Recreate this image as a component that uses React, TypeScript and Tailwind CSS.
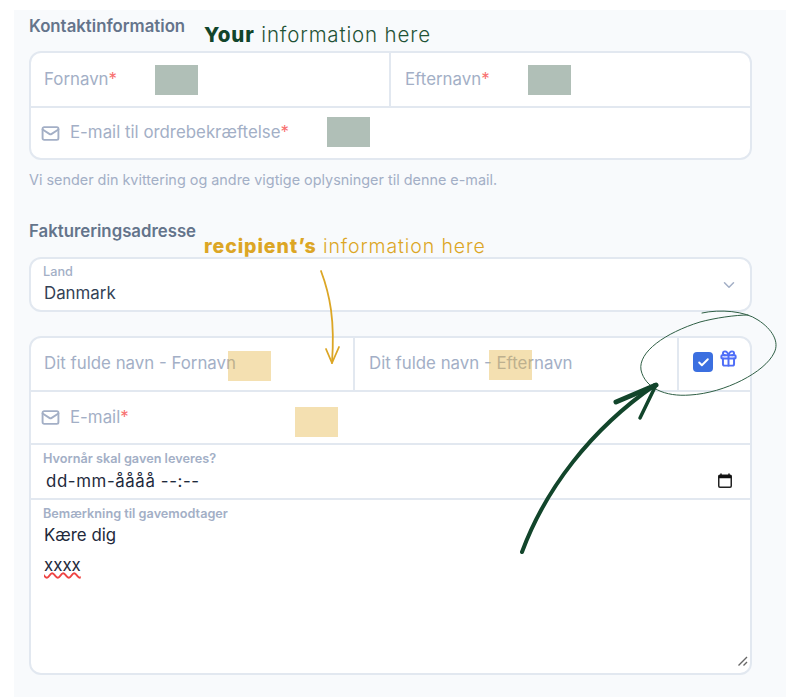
import { Check, ChevronDown, Gift, Mail } from 'lucide-react';

const font = "font-['Inter','Liberation_Sans',sans-serif]";

function Required() {
  return <span className="text-[#f87171]">*</span>;
}

function Patch({ className }: { className: string }) {
  return <div className={`absolute h-[30px] w-[43px] ${className}`} />;
}

export default function App() {
  return (
    <div className={`${font} relative h-[700px] w-[800px] overflow-hidden bg-white px-[14px] pt-[10px]`}>
      <div className="h-[687px] bg-[#f8fafc] pl-[15px] pr-[34px]">
        {/* kontakt */}
        <h2 className="pt-[6px] text-[16.8px] leading-[20px] font-semibold text-[#64748b]">Kontaktinformation</h2>
        <div className="mt-[15px] h-[109px] rounded-[12px] border-2 border-[#e2e8f0] bg-white">
          <div className="flex h-[55px] border-b-2 border-[#e2e8f0]">
            <div className="flex w-[360px] items-center border-r-2 border-[#e2e8f0] pl-[13px] text-[16.85px] text-[#a3afc6]">
              Fornavn<Required />
            </div>
            <div className="flex flex-1 items-center pl-[14px] text-[16.85px] text-[#a3afc6]">
              Efternavn<Required />
            </div>
          </div>
          <div className="flex h-[50px] items-center pl-[10px] text-[16.85px] text-[#a3afc6]">
            <Mail size={19} strokeWidth={2.4} className="mr-[10px] text-[#a3afc6]" />
            E-mail til ordrebekræftelse<Required />
          </div>
        </div>
        <p className="mt-[12px] text-[14.4px] leading-[16px] text-[#a3afc6]">
          Vi sender din kvittering og andre vigtige oplysninger til denne e-mail.
        </p>

        {/* faktura */}
        <h2 className="mt-[33px] text-[16.8px] leading-[20px] font-semibold text-[#64748b]">Faktureringsadresse</h2>
        <div className="relative mt-[16px] h-[55px] rounded-[12px] border-2 border-[#e2e8f0] bg-white pl-[12px] pt-[6px]">
          <div className="text-[12.7px] leading-[14px] font-medium text-[#a3afc6]">Land</div>
          <div className="mt-[3px] pl-[1px] text-[16.85px] leading-[22px] text-[#334155]">Danmark</div>
          <ChevronDown size={18} className="absolute right-[12px] top-[17px] text-[#a3afc6]" />
        </div>

        <div className="mt-[24px] flex h-[339px] flex-col rounded-[12px] border-2 border-[#e2e8f0] bg-white">
          <div className="flex h-[54px] border-b-2 border-[#e2e8f0] text-[16.85px] text-[#a3afc6]">
            <div className="flex w-[324px] items-center border-r-2 border-[#e2e8f0] pl-[13px]">Dit fulde navn - Fornavn</div>
            <div className="flex w-[324px] items-center border-r-2 border-[#e2e8f0] pl-[14px]">Dit fulde navn - Efternavn</div>
            <div className="flex flex-1 items-start pl-[14px] pt-[12px]">
              <span className="mt-[2px] flex h-[20px] w-[20px] items-center justify-center rounded-[4px] bg-[#3b6fe0]">
                <Check size={13} strokeWidth={3.5} className="text-white" />
              </span>
              <Gift size={19} strokeWidth={2.5} className="-mt-[1px] ml-[6px] text-[#4f6ef7]" />
            </div>
          </div>
          <div className="flex h-[53px] items-center border-b-2 border-[#e2e8f0] pl-[10px] text-[16.85px] text-[#a3afc6]">
            <Mail size={19} strokeWidth={2.4} className="mr-[10px] text-[#a3afc6]" />
            E-mail<Required />
          </div>
          <div className="relative h-[55px] border-b-2 border-[#e2e8f0] pl-[12px] pt-[7px]">
            <div className="text-[12.7px] leading-[14px] font-semibold text-[#a3afc6]">Hvornår skal gaven leveres?</div>
            <div className="mt-[4px] pl-[3px] text-[16.85px] leading-[22px] tracking-[0.6px] whitespace-pre text-[#1e293b]">dd-mm-åååå --:--</div>
            <svg viewBox="0 0 16 16" className="absolute right-[17px] top-[28px] h-[16px] w-[16px]">
              <path d="M4 0.5v2M12 0.5v2" stroke="#111" strokeWidth="1.5" />
              <rect x="1.75" y="2.25" width="12.5" height="12" rx="1.2" fill="none" stroke="#222" strokeWidth="1.5" />
              <rect x="1.75" y="2.25" width="12.5" height="3" fill="#111" />
            </svg>
          </div>
          <div className="relative flex-1 pl-[12px] pt-[7px]">
            <div className="text-[12.7px] leading-[14px] font-semibold text-[#a3afc6]">Bemærkning til gavemodtager</div>
            <div className="mt-[2px] pl-[1px] text-[16.85px] leading-[24px] text-[#1e293b]">Kære dig</div>
            <div className="mt-[6px] pl-[1px] text-[16.85px] leading-[24px] text-[#1e293b] underline decoration-wavy decoration-[#ef4444] decoration-2">xxxx</div>
            <svg viewBox="0 0 12 12" className="absolute bottom-[6px] right-[1px] h-[12px] w-[12px]">
              <path d="M1.5 10.5L10 2M6.5 10.5L10 7" stroke="#666" strokeWidth="1.4" />
            </svg>
          </div>
        </div>
      </div>

      {/* censur-felter */}
      <Patch className="left-[155px] top-[65px] bg-[#b0bfb7]" />
      <Patch className="left-[528px] top-[65px] bg-[#b0bfb7]" />
      <Patch className="left-[327px] top-[117px] bg-[#b0bfb7]" />
      <Patch className="left-[228px] top-[351px] bg-[#e3b23c]/40" />
      <Patch className="left-[489px] top-[350px] bg-[#e3b23c]/40" />
      <Patch className="left-[295px] top-[407px] bg-[#e3b23c]/40" />

      {/* annoteringer */}
      <div className="absolute left-[204px] top-[21px] text-[20.5px] leading-[28px] font-light tracking-[0.85px] text-[#1f5236]">
        <span className="font-extrabold text-[#12452b]">Your</span> information here
      </div>
      <div className="absolute left-[204px] top-[232px] text-[19.5px] leading-[28px] font-light tracking-[0.9px] text-[#dca625]">
        <span className="font-extrabold">recipient’s</span> information here
      </div>
      <svg className="pointer-events-none absolute left-0 top-0" width="800" height="700" fill="none" strokeLinecap="round" strokeLinejoin="round">
        <path d="M321 271C330 295 335 320 332 363" stroke="#dca625" strokeWidth="1.8" />
        <path d="M326 349L332 363L339 347" stroke="#dca625" strokeWidth="1.8" />
        <path d="M702 313C720 309 745 311 758 320C772 329 780 342 774 353C765 372 725 393 690 395C665 397 645 388 641 370C638 352 665 333 700 322C715 318 735 315 748 315" stroke="#2f5f45" strokeWidth="1" />
        <path d="M522 552C545 490 590 430 655 385" stroke="#12452b" strokeWidth="4" />
        <path d="M616 402L656 385" stroke="#12452b" strokeWidth="5" />
        <path d="M640 418L656 385" stroke="#12452b" strokeWidth="3.5" />
      </svg>
    </div>
  );
}
